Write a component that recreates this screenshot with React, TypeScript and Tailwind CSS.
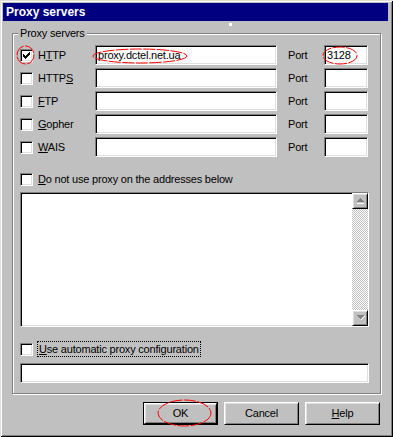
import React from 'react';

const sunken =
  'bg-white border border-t-[#808080] border-l-[#808080] border-b-white border-r-white shadow-[inset_1px_1px_0_#000,inset_-1px_-1px_0_#dfdfdf]';
const raised =
  'bg-[#c0c0c0] border border-t-white border-l-white border-b-black border-r-black shadow-[inset_1px_1px_0_#dfdfdf,inset_-1px_-1px_0_#808080]';

// win95 style check mark, drawn pixel by pixel
const CHECK =
  'M9 3h1v1h-1z M8 4h2v1h-2z M3 5h1v1h-1z M7 5h3v1h-3z M3 6h2v1h-2z M6 6h3v1h-3z M3 7h5v1h-5z M4 8h3v1h-3z M5 9h1v1h-1z';

type Label = [string, string, string];

const rows: { label: Label; value: string; port: string; checked: boolean }[] = [
  { label: ['H', 'T', 'TP'], value: 'proxy.dctel.net.ua', port: '3128', checked: true },
  { label: ['HTTP', 'S', ''], value: '', port: '', checked: false },
  { label: ['', 'F', 'TP'], value: '', port: '', checked: false },
  { label: ['', 'G', 'opher'], value: '', port: '', checked: false },
  { label: ['', 'W', 'AIS'], value: '', port: '', checked: false },
];

function Text({ label }: { label: Label }): React.JSX.Element {
  return (
    <>
      {label[0]}
      <span className="underline underline-offset-[1px]">{label[1]}</span>
      {label[2]}
    </>
  );
}

function Checkbox({ checked = false }: { checked?: boolean }): React.JSX.Element {
  return (
    <div className={`relative w-[13px] h-[13px] shrink-0 ${sunken}`}>
      {checked && (
        <svg className="absolute left-[-1px] top-[-1px]" width="13" height="13" shapeRendering="crispEdges">
          <path d={CHECK} fill="#000" />
        </svg>
      )}
    </div>
  );
}

function Input({ value, className }: { value?: string; className: string }): React.JSX.Element {
  return (
    <div className={`h-[20px] flex items-center pl-[2px] ${sunken} ${className}`}>
      <span className="leading-none">{value}</span>
    </div>
  );
}

function Button({ children, isDefault = false }: { children: React.ReactNode; isDefault?: boolean }): React.JSX.Element {
  if (isDefault) {
    return (
      <div className="w-[75px] h-[23px] border border-black flex">
        <div className={`flex-1 flex items-center justify-center ${raised}`}>{children}</div>
      </div>
    );
  }
  return <div className={`w-[75px] h-[23px] flex items-center justify-center ${raised}`}>{children}</div>;
}

function Arrow({ up }: { up: boolean }): React.JSX.Element {
  return (
    <div className={`w-[16px] h-[16px] flex items-center justify-center ${raised}`}>
      <svg width="9" height="6" shapeRendering="crispEdges">
        {up ? (
          <>
            <path d="M1 5h7v1h-7z M4 1h1v1h-1z" fill="#fff" />
            <path d="M4 0h1v1h-1z M3 1h3v1h-3z M2 2h5v1h-5z M1 3h7v1h-7z" fill="#808080" />
          </>
        ) : (
          <>
            <path d="M5 4h1v1h-1z M6 3h1v1h-1z M7 2h1v1h-1z M8 1h1v1h-1z" fill="#fff" />
            <path d="M1 0h7v1h-7z M2 1h5v1h-5z M3 2h3v1h-3z M4 3h1v1h-1z" fill="#808080" />
          </>
        )}
      </svg>
    </div>
  );
}

function App(): React.JSX.Element {
  return (
    <div
      className="relative w-[393px] h-[437px] bg-[#c0c0c0] pt-[3px] pl-[3px] pr-[5px] text-black text-[11px] tracking-[-0.2px] font-['Liberation_Sans',Arial,sans-serif] shadow-[inset_1px_1px_0_#dfdfdf,inset_-1px_-1px_0_#000,inset_2px_2px_0_#fff,inset_-2px_-2px_0_#808080]"
    >
      <div className="h-[18px] bg-[#000080] text-white font-bold text-[12px] tracking-normal pl-[3px] flex items-center">
        Proxy servers
      </div>

      <div className="relative ml-[9px] mt-[12px] w-[369px] border border-[#808080] shadow-[inset_1px_1px_0_#fff,1px_1px_0_#fff] pt-[11px] pl-[7px] pr-[11px] pb-[10px]">
        <span className="absolute left-[5px] top-[-7px] bg-[#c0c0c0] px-[2px] leading-[13px]">Proxy servers</span>

        <div className="flex flex-col gap-[3px]">
          {rows.map((row, i) => (
            <div key={i} className="flex items-center h-[20px]">
              <Checkbox checked={row.checked} />
              <span className="ml-[5px] w-[57px]">
                <Text label={row.label} />
              </span>
              <Input value={row.value} className="w-[182px]" />
              <span className="ml-[11px] w-[36px]">Port</span>
              <Input value={row.port} className="w-[44px]" />
            </div>
          ))}
        </div>

        <div className="mt-[14px] h-[16px] flex items-center">
          <Checkbox />
          <span className="ml-[5px]">
            <Text label={['', 'D', 'o not use proxy on the addresses below']} />
          </span>
        </div>

        <div className={`mt-[5px] w-[349px] h-[135px] flex justify-end ${sunken}`}>
          <div className="w-[16px] flex flex-col">
            <Arrow up />
            <div className="flex-1 bg-[repeating-conic-gradient(#c0c0c0_0_25%,#fff_0_50%)] bg-[length:2px_2px]" />
            <Arrow up={false} />
          </div>
        </div>

        <div className="mt-[14px] h-[16px] flex items-center">
          <Checkbox />
          <span className="ml-[4px] px-[1px] border border-dotted border-black leading-[14px]">
            <Text label={['', 'U', 'se automatic proxy configuration']} />
          </span>
        </div>

        <Input className="mt-[6px] w-[349px]" />
      </div>

      <div className="ml-[9px] mt-[8px] w-[369px] pr-[1px] flex justify-end gap-[6px]">
        <Button isDefault>OK</Button>
        <Button>Cancel</Button>
        <Button>
          <Text label={['', 'H', 'elp']} />
        </Button>
      </div>

      <div className="absolute left-[229px] top-[23px] w-[3px] h-[3px] bg-white" />

      <svg className="absolute inset-0 pointer-events-none" width="393" height="437">
        <g fill="none" stroke="#f00" strokeWidth="1" strokeDasharray="12 1.5">
          <ellipse cx="25.5" cy="55" rx="8.5" ry="9" />
          <ellipse cx="140" cy="56" rx="47" ry="7" />
          <ellipse cx="340" cy="55.5" rx="17" ry="8.5" />
          <ellipse cx="184.5" cy="413" rx="26.5" ry="13" />
        </g>
      </svg>
    </div>
  );
}

export default App;
